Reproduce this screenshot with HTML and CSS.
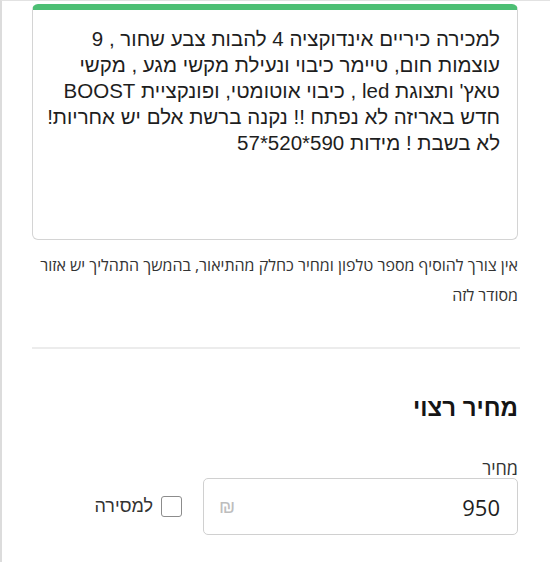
FILE: index.html
```html
<!DOCTYPE html>
<html lang="he" dir="rtl">
<head>
<meta charset="utf-8">
<link rel="stylesheet" href="styles.css">
</head>
<body>
<div class="page">
  <div class="desc-box">למכירה כיריים אינדוקציה 4 להבות צבע שחור , 9<br>עוצמות חום, טיימר כיבוי ונעילת מקשי מגע , מקשי<br>טאץ' ותצוגת led , כיבוי אוטומטי, ופונקציית BOOST<br>חדש באריזה לא נפתח !! נקנה ברשת אלם יש אחריות!<br>לא בשבת ! מידות 590*520*57</div>
  <p class="helper">אין צורך להוסיף מספר טלפון ומחיר כחלק מהתיאור, בהמשך התהליך יש אזור מסודר לזה</p>
  <div class="divider"></div>
  <h2 class="heading">מחיר רצוי</h2>
  <div class="label">מחיר</div>
  <div class="price-row">
    <div class="price-input">
      <span class="price-value">950</span>
      <span class="currency">₪</span>
    </div>
    <label class="delivery">
      <span class="checkbox"></span>
      <span class="delivery-text">למסירה</span>
    </label>
  </div>
</div>
</body>
</html>
```
FILE: styles.css
```css
html, body {
  margin: 0;
  padding: 0;
  background: #fff;
  overflow: hidden;
}
body {
  font-family: "Liberation Sans", Arial, sans-serif;
  color: #222;
}
.page {
  border-left: 2px solid #dcdcdc;
  border-top: 1px solid #e2e2e2;
  height: 100vh;
  padding: 3px 32px 0 30px;
  box-sizing: border-box;
}
.desc-box {
  box-sizing: border-box;
  height: 236px;
  border: 1px solid #d4d4d4;
  border-top: 6px solid #4dbf74;
  border-radius: 6px;
  padding: 16px 17px 16px 8px;
  font-size: 20.5px;
  line-height: 26px;
  color: #1e1e1e;
  text-align: right;
}
.helper {
  margin: 10px 0 0 0;
  font-family: "Open Sans", "Liberation Sans", sans-serif;
  font-size: 16px;
  line-height: 30px;
  color: #333;
}
.divider {
  margin: 37px -2px 0 0;
  height: 2px;
  background: #ececec;
}
.heading {
  margin: 45px 0 0 0;
  font-size: 24px;
  line-height: 27px;
  font-weight: bold;
  color: #151515;
}
.label {
  margin-top: 37px;
  font-family: "Open Sans", "Liberation Sans", sans-serif;
  font-size: 18px;
  line-height: 20px;
  color: #333;
}
.price-row {
  display: flex;
  align-items: center;
  gap: 21px;
}
.price-input {
  box-sizing: border-box;
  width: 315px;
  height: 57px;
  border: 1px solid #d0d0d0;
  border-radius: 5px;
  padding: 0 17px 0 15px;
  display: flex;
  align-items: center;
  justify-content: space-between;
}
.price-value {
  font-family: "Open Sans", "Liberation Sans", sans-serif;
  font-size: 22px;
  color: #1e1e1e;
}
.currency {
  font-size: 19px;
  color: #bdbdbd;
}
.delivery {
  display: flex;
  align-items: center;
  gap: 8px;
}
.checkbox {
  box-sizing: border-box;
  width: 21px;
  height: 21px;
  border: 1px solid #8c8c8c;
  border-radius: 3px;
}
.delivery-text {
  font-size: 18px;
  color: #333;
}
```
